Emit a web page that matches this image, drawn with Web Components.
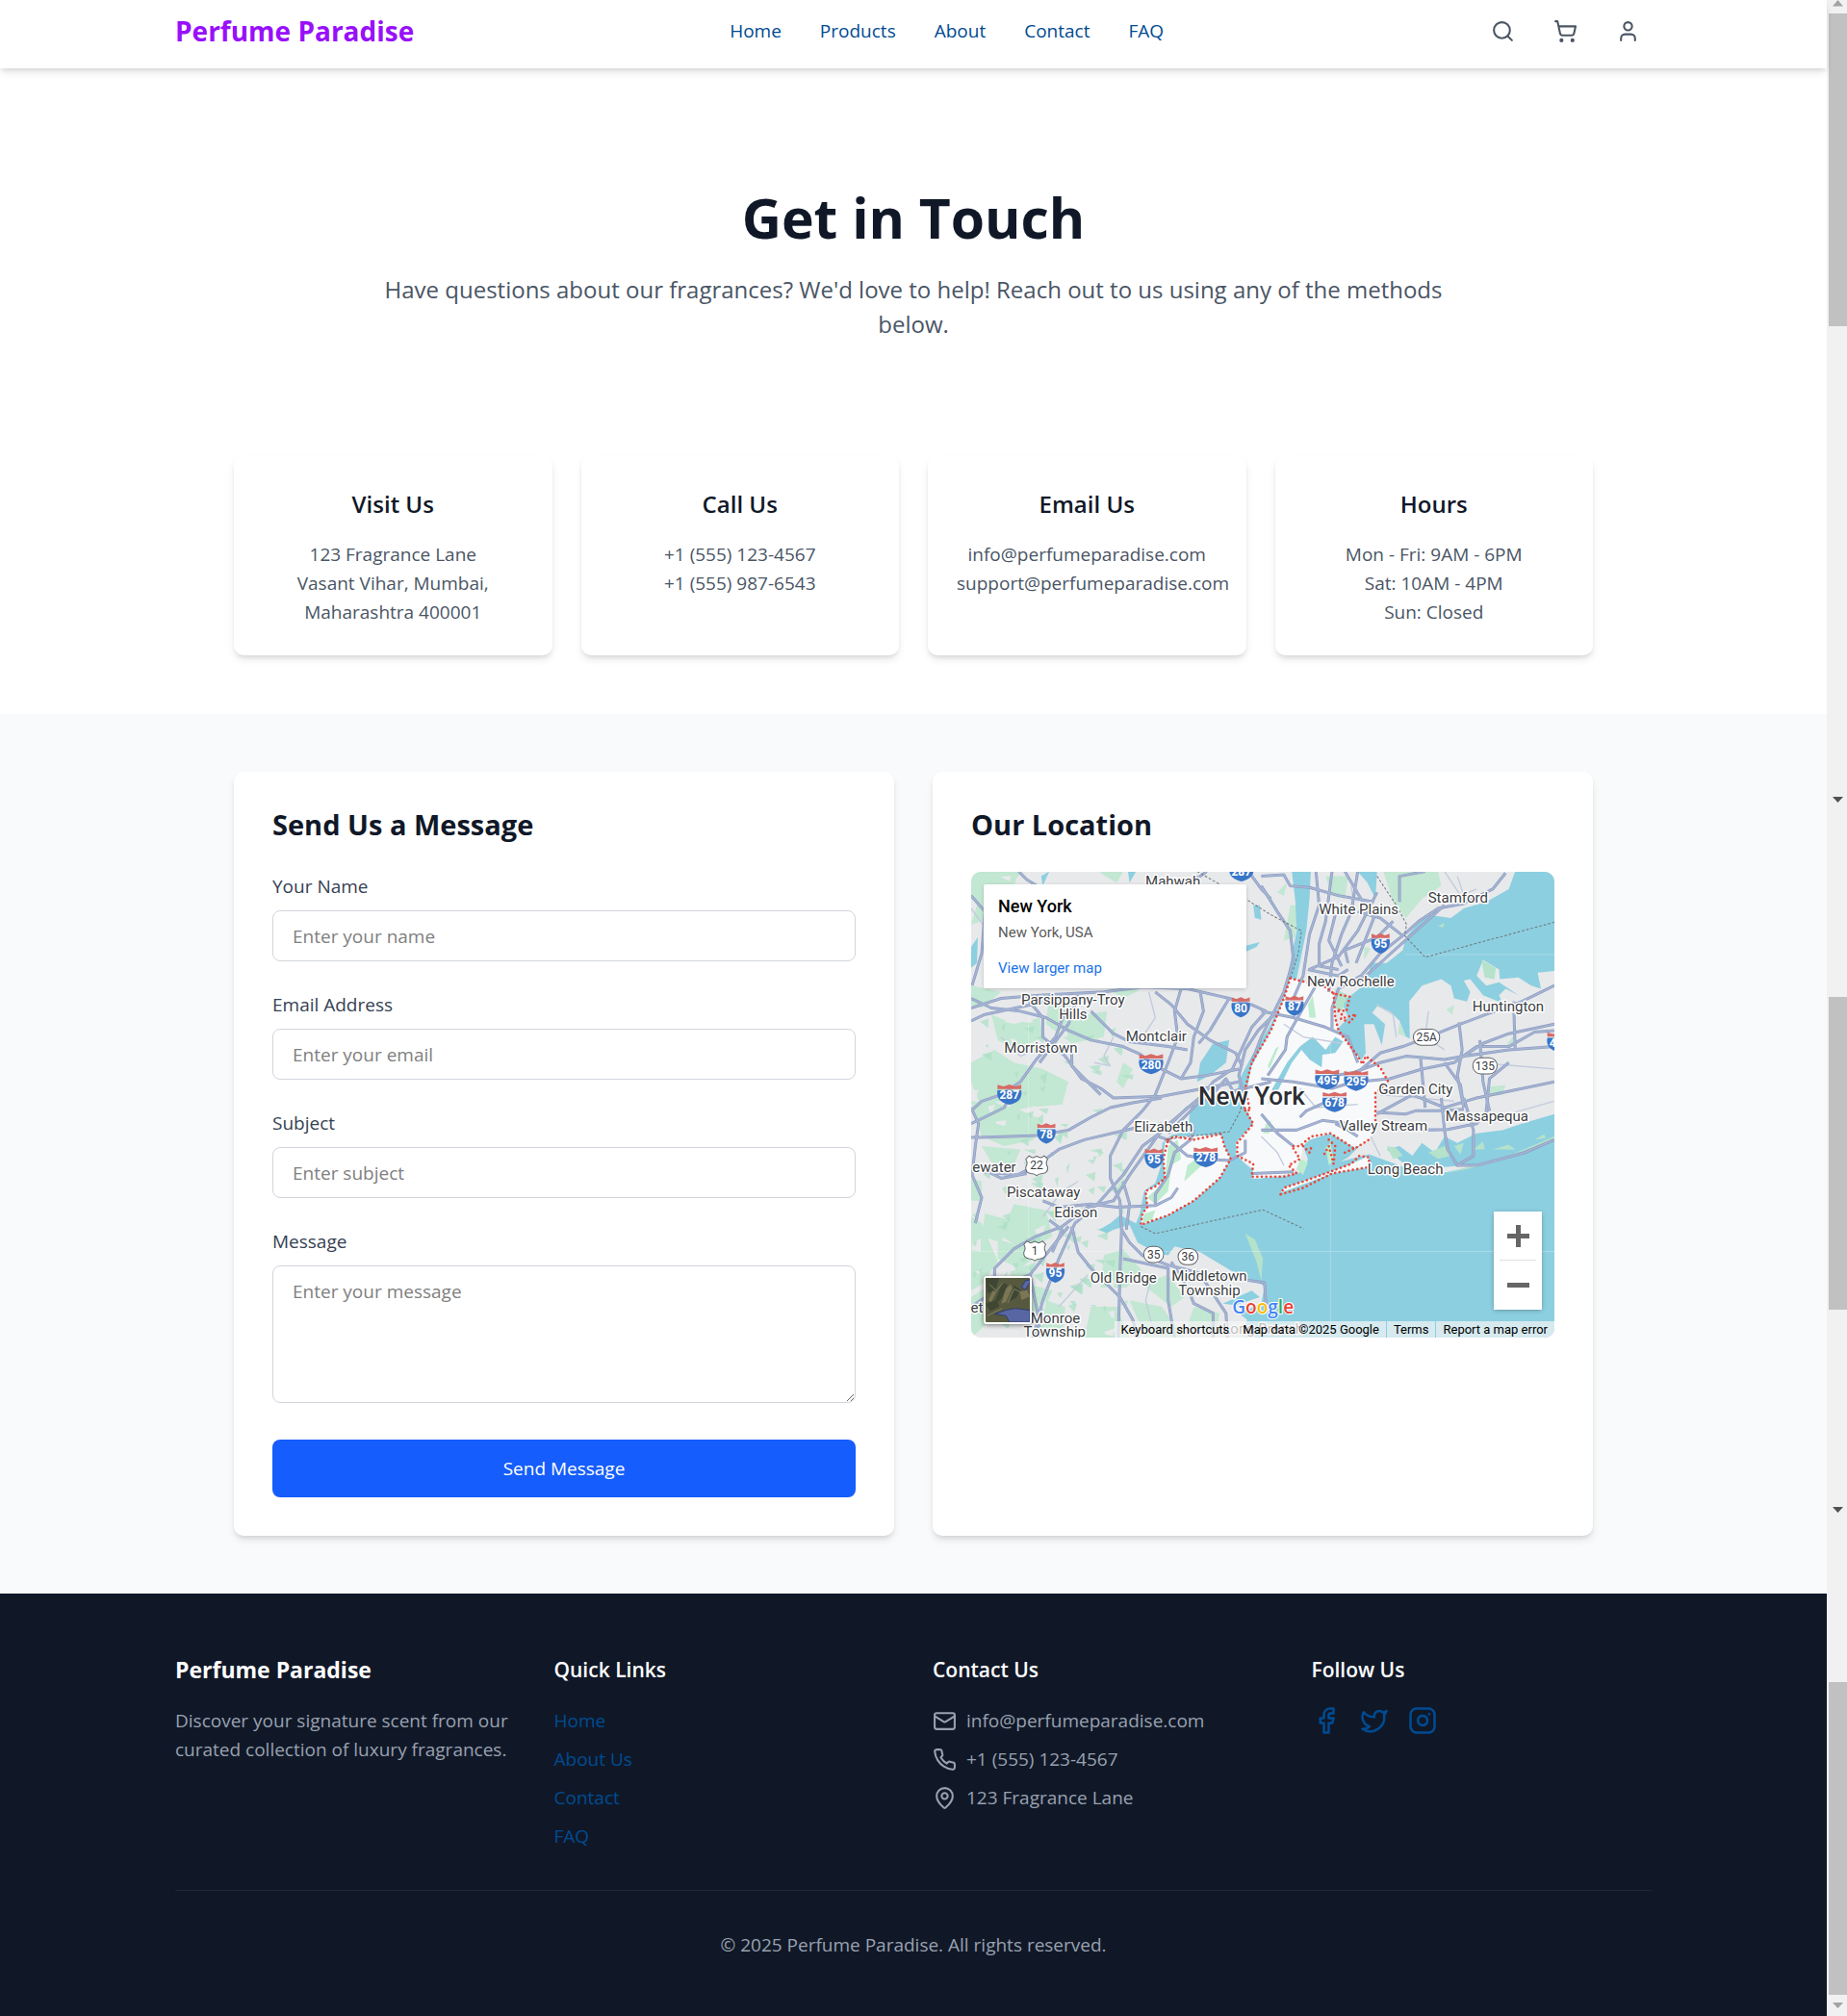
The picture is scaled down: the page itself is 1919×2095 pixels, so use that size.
<!DOCTYPE html>
<html lang="en">
<head>
<meta charset="utf-8">
<meta name="viewport" content="width=device-width, initial-scale=1">
<title>Perfume Paradise - Contact</title>
<style>
:root{
  --ink:#101828; --body:#4a5565; --label:#364153; --muted:#99a1af; --link:#004b91;
  --purple:#9810fa; --blue:#155dfc; --line:#d1d5dc; --tint:#f9fafb;
  --shadow:0 5px 8px -1px rgba(0,0,0,.1),0 3px 5px -2px rgba(0,0,0,.1);
}
*{box-sizing:border-box}
body{margin:0;font:19px/30px "Open Sans","Noto Sans",sans-serif;color:var(--ink);background:#fff}
.shell{display:grid;grid-template-columns:minmax(0,1fr) 21px}
.cards{display:grid;grid-template-columns:repeat(4,minmax(0,1fr));gap:30px;max-width:1412px;margin:0 auto 61px}
.tint{background:var(--tint);padding:60px 0}
.pair{display:grid;grid-template-columns:repeat(2,minmax(0,1fr));gap:40px;max-width:1412px;margin:0 auto}
</style>
</head>
<body>
<div class="shell">
  <div>
    <site-header></site-header>
    <main>
      <page-hero>
        <span slot="title">Get in Touch</span>
        Have questions about our fragrances? We'd love to help! Reach out to us using any of the methods below.
      </page-hero>
      <section class="cards">
        <info-card><span slot="title">Visit Us</span>123 Fragrance Lane<br>Vasant Vihar, Mumbai,<br>Maharashtra 400001</info-card>
        <info-card><span slot="title">Call Us</span>+1 (555) 123-4567<br>+1 (555) 987-6543</info-card>
        <info-card><span slot="title">Email Us</span>info@perfumeparadise.com<br>support@perfumeparadise.com</info-card>
        <info-card><span slot="title">Hours</span>Mon - Fri: 9AM - 6PM<br>Sat: 10AM - 4PM<br>Sun: Closed</info-card>
      </section>
      <section class="tint">
        <div class="pair">
          <content-panel><span slot="title">Send Us a Message</span><message-form></message-form></content-panel>
          <content-panel><span slot="title">Our Location</span><location-map></location-map></content-panel>
        </div>
      </section>
    </main>
    <site-footer></site-footer>
  </div>
  <scroll-rail></scroll-rail>
</div>
<script>
const define = (name, html, setup) => customElements.define(name, class extends HTMLElement {
  connectedCallback() {
    if (this.shadowRoot) return;
    const root = this.attachShadow({mode: 'open'});
    const t = document.createElement('template');
    t.innerHTML = '<style>*{box-sizing:border-box}:host{display:block}</style>' + (typeof html === 'function' ? html(this) : html);
    root.append(t.content.cloneNode(true));
    if (setup) setup(root, this);
  }
});

const ICONS = {
  search: '<circle cx="11" cy="11" r="8"/><path d="m21 21-4.3-4.3"/>',
  cart: '<circle cx="8" cy="21" r="1"/><circle cx="19" cy="21" r="1"/><path d="M2.05 2.05h2l2.66 12.42a2 2 0 0 0 2 1.58h9.78a2 2 0 0 0 1.95-1.57l1.65-7.43H5.12"/>',
  user: '<path d="M19 21v-2a4 4 0 0 0-4-4H9a4 4 0 0 0-4 4v2"/><circle cx="12" cy="7" r="4"/>',
  mail: '<rect width="20" height="16" x="2" y="4" rx="2"/><path d="m22 7-8.97 5.7a1.94 1.94 0 0 1-2.06 0L2 7"/>',
  phone: '<path d="M22 16.92v3a2 2 0 0 1-2.18 2 19.79 19.79 0 0 1-8.63-3.07 19.5 19.5 0 0 1-6-6 19.79 19.79 0 0 1-3.07-8.67A2 2 0 0 1 4.11 2h3a2 2 0 0 1 2 1.72 12.84 12.84 0 0 0 .7 2.81 2 2 0 0 1-.45 2.11L8.09 9.91a16 16 0 0 0 6 6l1.27-1.27a2 2 0 0 1 2.11-.45 12.84 12.84 0 0 0 2.81.7A2 2 0 0 1 22 16.92z"/>',
  pin: '<path d="M20 10c0 5-5.54 10.19-7.4 11.8a1 1 0 0 1-1.2 0C9.54 20.19 4 15 4 10a8 8 0 0 1 16 0"/><circle cx="12" cy="10" r="3"/>',
  facebook: '<path d="M18 2h-3a5 5 0 0 0-5 5v3H7v4h3v8h4v-8h3l1-4h-4V7a1 1 0 0 1 1-1h3z"/>',
  twitter: '<path d="M22 4s-.7 2.1-2 3.4c1.6 10-9.4 17.3-18 11.6 2.2.1 4.4-.6 6-2C3 15.5.5 9.6 3 5c2.2 2.6 5.6 4.1 9 4-.9-4.2 4-6.6 7-3.8 1.1 0 3-1.2 3-1.2z"/>',
  instagram: '<rect width="20" height="20" x="2" y="2" rx="5"/><path d="M16 11.37A4 4 0 1 1 12.63 8 4 4 0 0 1 16 11.37z"/><path d="M17.5 6.5h.01"/>'
};
define('line-icon', el => `<style>
  :host{width:25px;height:25px;flex:none}
  :host([large]){width:30px;height:30px}
  svg{display:block;width:100%;height:100%}
  </style><svg viewBox="0 0 24 24" fill="none" stroke="currentColor" stroke-width="2" stroke-linecap="round" stroke-linejoin="round" aria-hidden="true">${ICONS[el.getAttribute('name')]}</svg>`);

define('site-header', `<style>
  :host{position:relative;z-index:1;background:#fff;padding-bottom:7px;box-shadow:var(--shadow)}
  .bar{display:flex;align-items:center;justify-content:space-between;height:64px;max-width:1534px;margin:0 auto}
  .brand{color:var(--purple);font-size:28px;font-weight:700;text-decoration:none}
  nav{display:flex;gap:40px}
  nav a{color:var(--link);text-decoration:none}
  .tools{display:flex;gap:16px}
  button{border:0;background:none;padding:12px;color:var(--body)}
  </style>
  <div class="bar">
    <a class="brand" href="#">Perfume Paradise</a>
    <nav aria-label="Main"><a href="#">Home</a><a href="#">Products</a><a href="#">About</a><a href="#">Contact</a><a href="#">FAQ</a></nav>
    <div class="tools">
      <button aria-label="Search"><line-icon name="search"></line-icon></button>
      <button aria-label="Cart"><line-icon name="cart"></line-icon></button>
      <button aria-label="Account"><line-icon name="user"></line-icon></button>
    </div>
  </div>`);

define('page-hero', `<style>
  :host{padding:118px 0 119px;text-align:center}
  h1{margin:0 0 20px;font-size:57px;line-height:74px;font-weight:700}
  p{margin:0 auto;max-width:1130px;font-size:24px;line-height:36px;color:var(--body)}
  </style><h1><slot name="title"></slot></h1><p><slot></slot></p>`);

define('info-card', `<style>
  :host{min-height:207px;padding:30px;border-radius:10px;background:#fff;box-shadow:var(--shadow);text-align:center}
  h2{margin:0 0 17px;font-size:24px;line-height:40px;font-weight:600}
  p{margin:0;color:var(--body)}
  </style><h2><slot name="title"></slot></h2><p><slot></slot></p>`);

define('content-panel', `<style>
  :host{padding:40px;border-radius:10px;background:#fff;box-shadow:var(--shadow)}
  h2{margin:0 0 34px;font-size:29px;line-height:30px;font-weight:700}
  </style><h2><slot name="title"></slot></h2><slot></slot>`);

define('form-field', el => {
  const area = el.hasAttribute('multiline'), hint = el.getAttribute('hint');
  const type = el.getAttribute('type') || 'text';
  return `<style>
  label{display:block;margin-bottom:10px;color:var(--label)}
  input,textarea{display:block;width:100%;border:1px solid var(--line);border-radius:8px;background:#fff;padding:0 20px;font:inherit;color:var(--ink);outline:0}
  input{height:53px}
  textarea{height:143px;padding:11px 20px;resize:vertical}
  ::placeholder{color:#808080;opacity:1}
  </style><label for="f">${el.getAttribute('label')}</label>` +
  (area ? `<textarea id="f" placeholder="${hint}"></textarea>` : `<input id="f" type="${type}" placeholder="${hint}">`);
});

define('message-form', `<style>
  form{display:grid;gap:30px}
  button{height:60px;margin-top:8px;border:0;border-radius:8px;background:var(--blue);color:#fff;font:inherit}
  </style>
  <form>
    <form-field label="Your Name" hint="Enter your name"></form-field>
    <form-field label="Email Address" type="email" hint="Enter your email"></form-field>
    <form-field label="Subject" hint="Enter subject"></form-field>
    <form-field label="Message" hint="Enter your message" multiline></form-field>
    <button type="button">Send Message</button>
  </form>`);

/* ---- Map artwork ---- */
const WATER = [
  '1025,45 1084,45 1080,130 1070,230 1050,330 1035,400 1000,480 950,580 905,660 890,730 880,770 905,835 860,880 850,925 880,955 905,975 905,1000 1000,995 1130,960 1265,925 1400,975 1500,982 1600,960 1842,875 1842,1497 880,1497 885,1440 860,1420 930,1390 940,1335 840,1290 740,1230 660,1212 640,1240 600,1230 545,1200 520,1145 470,1160 450,1170 425,1160 460,1140 490,1115 540,1140 552,1110 565,1040 600,1015 618,960 622,890 650,865 700,855 710,780 760,745 800,750 850,740 868,680 900,620 960,520 1000,430 1020,330 1040,230 1036,140',
  '1720,45 1842,45 1842,355 1790,360 1800,410 1770,400 1730,375 1672,380 1670,350 1620,320 1600,370 1630,400 1670,390 1730,430 1690,410 1670,430 1680,455 1620,430 1580,380 1560,385 1580,420 1570,450 1530,440 1520,400 1490,380 1430,400 1390,450 1392,565 1380,560 1360,510 1330,480 1290,465 1275,485 1315,520 1305,585 1280,520 1250,520 1255,610 1235,640 1190,570 1168,535 1200,500 1180,450 1210,430 1260,390 1270,330 1320,330 1370,290 1380,250 1410,215 1450,180 1520,190 1560,160 1630,140 1700,100',
  '1030,600 1060,570 1110,575 1160,560 1190,570 1225,610 1180,600 1150,610 1120,660 1100,650 1080,610 1050,610 1020,640 980,700 960,760 935,790 950,740 975,690 1010,630',
  '1230,45 1290,45 1285,130 1260,80',
  '1320,910 1360,900 1400,930 1430,890 1470,920 1500,870 1540,890 1600,860 1680,850 1740,830 1842,800 1842,870 1740,920 1620,955 1500,965 1380,960',
  '780,580 830,570 820,640 770,680 730,700 740,640','885,275 925,265 915,280 870,300','515,45 540,45 520,80','27,280 48,250 45,330 27,345','245,60 270,45 250,90','905,150 925,150 930,195 910,190',
  '810,1390 900,1350 925,1370 850,1395'
];
const GREEN = [
  '27,45 180,45 150,110 70,160 27,130','420,45 500,45 480,80','60,100 140,80 120,180 27,210','27,400 120,420 60,470 27,460','27,640 100,600 160,640 250,660 330,700 310,770 200,780 120,800 50,760 27,700','90,490 160,520 240,500 250,560 170,600 110,570','270,430 330,440 340,500 450,480 440,560 340,580 260,520','500,640 530,660 500,720 480,700','450,410 560,410 500,440',
  '27,760 140,770 250,820 220,880 130,900 60,870','60,900 180,910 160,960 90,950','27,1000 60,1010 60,1070 27,1070','160,1080 260,1100 280,1180 200,1230 120,1180','70,1110 150,1130 120,1200 60,1180','27,1120 60,1140 110,1260 60,1330 27,1350','150,1290 230,1260 210,1330 280,1350 250,1420 150,1430','420,910 440,920 425,935','500,1000 520,1030 470,1040',
  '440,1240 500,1220 560,1290 510,1340 430,1340','560,1330 640,1300 690,1370 650,1400','400,1400 480,1400 520,1497 380,1497','520,1380 620,1400 690,1497 570,1497','260,1380 320,1400 310,1497 240,1497','720,1400 800,1420 790,1480 700,1460','110,1190 250,1230 180,1280 110,1250','27,1370 90,1330 110,1420 27,1497',
  '1310,45 1480,45 1490,90 1430,130 1380,190 1340,140','1130,60 1200,60 1190,130 1150,120','1020,150 1045,150 1035,250 1000,260','980,110 1010,80 1000,120','1440,45 1480,50 1470,90','1505,475 1530,460 1525,490','1640,715 1690,710 1680,740 1640,745','1360,515 1380,560 1355,550','1690,590 1715,555 1712,590','1070,450 1090,420 1090,500','1250,280 1270,285 1250,320'
];
/* Parks, barrier islands and marsh that lie over the water */
const SHORE_GREEN = [
  '1615,320 1660,345 1655,380 1625,375','1480,215 1500,205 1495,220','880,1172 910,1190 935,1250 930,1320 915,1260','1160,410 1200,430 1180,480 1160,470','1320,900 1350,905 1370,930 1340,940','1450,920 1500,900 1520,930 1480,940','1530,900 1560,890 1550,925','1590,910 1620,885 1625,910','1650,910 1700,895 1720,910','1780,880 1810,862 1815,875','1500,985 1700,930 1842,870 1842,880 1600,965'
];
const CITY = [
  '1020,378 1130,400 1155,420 1160,500 1170,540 1230,620 1245,640 1255,620 1300,650 1325,700 1285,735 1285,850 1265,880 1220,905 1145,860 1060,900 1050,960 1020,985 930,1000 900,1000 905,970 855,930 850,890 905,830 875,770 890,700 900,650 960,540 1000,440',
  '640,880 660,870 805,865 815,900 835,940 800,1000 720,1070 640,1115 555,1145 560,1110 575,1090 570,1040 600,1025 630,1000 625,940 630,890',
  '990,1045 1000,1030 1060,1010 1130,985 1210,955 1265,930 1265,965 1150,985'
];
const CITY_WATER = [
  '1010,640 1050,590 1090,560 1130,600 1160,560 1185,575 1160,610 1120,615 1118,655 1080,630 1055,600 1025,640 985,720 950,770 965,720',
  '1060,900 1080,880 1145,860 1220,905 1240,895 1200,935 1130,975 1060,985 1075,940'
];
const CITY_GREEN = ['640,900 670,880 680,940 650,960 640,1040 600,1080 575,1060 630,1010','700,960 740,930 745,960 690,1010','565,1110 600,1100 590,1130 560,1140','1050,940 1075,950 1060,990 1040,970','945,830 960,820 955,860 935,860','1075,460 1090,430 1100,500 1080,500','950,650 975,595 985,590 955,660','1130,905 1145,890 1155,940 1140,960'];
const ROADS = [
  '27,120 70,170 60,300 30,400','27,470 120,440 240,430 340,425 440,420 560,405 700,410 830,440 900,460 945,480','27,440 90,470 180,480 260,500 330,540 400,570 500,590 555,615 600,650 680,690 760,680 860,660','400,480 470,550 520,575 640,590 700,600','320,480 290,560 230,630 180,700 120,740 60,760 27,790','200,440 250,500 250,560 320,620 370,690 430,720 470,750 620,745 700,730 860,700','600,420 650,460 700,520 770,570 850,610 870,650','680,410 660,480 670,560 640,640 600,740 560,790','740,420 750,480 720,560 710,640 680,690','175,45 200,70 240,95','890,45 930,100 960,130','660,90 740,60 760,45','980,480 920,540 880,600 860,680 870,720','945,480 900,530 840,660 780,700 720,780 640,860','830,440 770,540 735,580','340,590 340,650 430,740','27,510 70,490 260,450','360,430 330,520 240,640','860,760 820,690 760,760',
  '930,60 1000,55 1020,90 1080,95 1170,120 1280,140','930,90 980,170 1020,230 1030,320 1000,420 930,560 900,640','1100,45 1110,150 1080,240 1060,370 1030,440','1150,45 1130,200 1110,270 1110,340 1170,350','1230,45 1210,170 1180,240 1150,330 1140,420','1290,110 1230,230 1170,310 1080,350','1190,45 1240,130 1280,190 1225,330','1690,50 1650,100 1560,145 1480,160 1420,200 1370,245 1300,300 1240,370 1170,410 1150,470 1150,540','1500,150 1400,240 1300,330 1220,400','1230,170 1300,190 1370,245','1200,330 1190,290 1290,250 1340,200','1160,180 1140,260 1180,340','1360,140 1360,60 1440,45','930,480 1030,500 1130,530 1200,560 1230,640','1100,400 1060,470 1010,560 1005,600 950,680','1075,350 1170,370 1200,350',
  '1230,670 1300,610 1370,590 1450,560 1550,520 1630,490 1740,450 1842,400','1100,690 1220,670 1300,640 1380,620 1500,630 1560,620 1620,580 1700,550 1842,520','1230,700 1330,690 1430,660 1530,640 1600,590 1700,590 1780,545 1842,540','1545,515 1555,600 1540,680 1560,780','1500,640 1550,710 1560,780','1610,570 1620,700 1640,790','1715,450 1720,600','1425,620 1440,780','930,690 1030,700 1150,720 1250,690','1290,800 1400,740 1500,780 1600,750 1842,700','1560,620 1700,600 1842,590','1630,790 1640,690 1700,640',
  '27,873 150,870 230,867 330,850 400,810 460,780 530,765 620,750','60,980 170,990 230,960 300,910 380,880 530,845 620,830','27,780 50,830 40,900 30,990 60,1060 40,1140','40,960 120,1000 200,985','960,700 760,750 700,780 640,840 560,900 500,990 420,1080 350,1140 300,1250 250,1380 220,1497','760,730 690,790 620,850 520,990 470,1070 390,1090 310,1150 230,1180 160,1220 100,1280 100,1400','560,790 500,850 460,930 460,1000 490,1070 495,1160 520,1200 560,1240 640,1270 760,1300 840,1310 940,1325 945,1400','495,1160 490,1300 485,1497','340,1150 360,1230 400,1280 490,1370 530,1440 545,1497','250,1070 300,1090 400,1080 480,1090 600,1085 650,1060 670,1030','500,1250 640,1280 640,1380 660,1497','650,1260 700,1340 720,1390 780,1420 780,1497','740,1300 820,1420 825,1497','610,870 640,880 700,930 760,940 830,945 880,920 880,880','640,990 660,920 710,880 720,850','600,1080 600,1050 640,990','500,1010 520,1080 510,1160','27,1400 130,1330 210,1300 330,1150','27,830 130,780 150,740','210,1300 240,1450 230,1497','270,1130 310,1160 280,1230',
  '1290,795 1380,800 1410,790 1480,790 1560,785','1490,750 1500,850 1510,910 1540,960 1600,960 1750,920 1842,880','1560,750 1590,850 1590,930 1540,960','1430,850 1510,848 1600,830 1640,780','1160,830 1200,850 1230,870','930,850 1040,850 1120,820 1240,835','1050,810 1070,790 1160,750','930,800 980,860 1030,900','900,985 1030,980'
];
const LOCAL = ['580,420 600,500 560,560','470,560 440,620 460,650 410,640','27,160 100,260 130,400','1500,45 1550,120 1600,100','1450,480 1440,560 1500,600','1290,460 1340,490 1350,560','1540,60 1560,120','1000,520 1060,560 1180,580','1050,720 1100,780 1230,770','930,870 980,920 1000,960','1300,740 1420,750 1530,760','1600,640 1842,660','1700,800 1842,760','1270,870 1300,930','250,1120 310,1040 360,1010','590,1300 570,1380 600,1497','300,1400 390,1300','120,560 180,620 230,600','1210,90 1220,170'];
const DOTS = [
  '1020,378 1080,392 1130,405 1155,425 1205,435 1195,480 1165,475 1190,500 1225,490 1205,515 1170,500','1020,378 1000,440 960,540 900,640 880,720 895,790 875,780 905,830 855,890 855,930 905,955 900,995 1000,995 1040,985 1015,960 1050,940 1025,900 1050,900 1085,870 1145,860 1220,908 1265,880','1155,425 1160,500 1170,540 1230,620 1245,645 1255,620 1300,655 1325,700 1285,735 1285,850',
  '640,880 660,870 720,880 805,862 815,900 835,940 800,1000 720,1070 640,1115 555,1145 560,1110 575,1090 570,1040 600,1025 630,1000 625,940 640,880','990,1050 1000,1030 1060,1010 1130,985 1210,955 1235,930 1265,935 1265,965 1150,985 1060,1030 990,1050','1140,880 1160,900 1155,955 1140,900 1120,935','1060,900 1080,920 1085,905','1190,920 1225,905'
];
const BORDERS = ['730,45 880,130 960,180 1055,230 1045,300 1022,375','1290,60 1350,150 1382,210 1376,245 1440,312 1842,203','555,1150 600,1172 935,1098 1062,1157','630,880 700,870 830,855 865,790 880,720'];
const PLACES = [
  [655,90,'Mahwah'],[344,460,'Parsippany-Troy'],[344,505,'Hills'],[244,609,'Morristown'],[603,573,'Montclair'],
  [1233,178,'White Plains'],[1542,141,'Stamford'],[1208,402,'New Rochelle'],[1698,481,'Huntington'],[1410,739,'Garden City'],
  [1632,821,'Massapequa'],[1310,852,'Valley Stream'],[1378,988,'Long Beach'],[625,854,'Elizabeth'],[99,981,'ewater'],
  [252,1058,'Piscataway'],[353,1122,'Edison'],[501,1324,'Old Bridge'],[768,1319,'Middletown'],[768,1364,'Township'],[289,1450,'Monroe'],[287,1493,'Township'],[70,1418,'eton'],[935,1485,'Long Branch']
];
const SHIELDS = [[868,45,'287'],[866,468,'80'],[587,645,'280'],[146,740,'287'],[1301,270,'95'],[1033,464,'87'],[1135,693,'495'],[1225,697,'295'],[1158,763,'678'],[1857,577,'495'],[261,861,'78'],[596,939,'95'],[757,935,'278'],[289,1294,'95']];
const US = [[231,961,'22'],[225,1226,'1']];
const STATE = [[1444,561,'25A',82],[1626,650,'135',76],[595,1237,'35',62],[702,1244,'36',62]];
const polys = (list, attrs) => `<g ${attrs}>${list.map(p => `<polygon points="${p}"/>`).join('')}</g>`;
const lines = (list, attrs) => `<g fill="none" stroke-linejoin="round" ${attrs}>${list.map(p => `<polyline points="${p}"/>`).join('')}</g>`;
const interstate = ([x, y, n]) => {
  const w = n.length > 2 ? 37 : 28;
  return `<g transform="translate(${x} ${y})"><path d="M${-w} -14H${w}C${w + 4} 8 ${w - 6} 24 0 31C${-w + 6} 24 ${-w - 4} 8 ${-w} -14z" fill="#3875c8"/><path d="M${-w} -18V-31L${-w / 2} -26L0 -32L${w / 2} -26L${w} -31V-18z" fill="#d86a66"/><text y="14" font-size="36" font-weight="700" fill="#fff">${n}</text></g>`;
};
const usRoute = ([x, y, n]) => `<g transform="translate(${x} ${y})"><path d="M-24 -31L-16 -26Q-8 -24 0 -30Q8 -24 16 -26L24 -31L34 -20Q26 -8 34 4Q36 22 18 24Q6 24 0 31Q-6 24 -18 24Q-36 22 -34 4Q-26 -8 -34 -20z" fill="#fff" stroke="#5f6368" stroke-width="3"/><text y="12" font-size="36" fill="#3c4043">${n}</text></g>`;
const stateRoute = ([x, y, n, w]) => `<g transform="translate(${x} ${y})"><rect x="${-w / 2}" y="-25" width="${w}" height="50" rx="25" fill="#fff" stroke="#5f6368" stroke-width="3"/><text y="12" font-size="36" fill="#3c4043">${n}</text></g>`;

define('location-map', `<style>
  :host{position:relative;height:484px;border-radius:10px;overflow:hidden;font-family:Roboto,sans-serif;background:#e8eaed}
  .art{display:block;width:100%;height:100%}
  .place{position:absolute;left:13px;top:13px;width:273px;height:108px;padding:12px 15px;background:#fff;border-radius:2px;box-shadow:0 1px 4px -1px rgba(0,0,0,.3);font-size:15px;line-height:20px;color:#5b5b5b}
  .place strong{display:block;margin-bottom:6px;font-size:18px;line-height:22px;font-weight:500;color:#000}
  .place a{display:block;margin-top:17px;color:#1a73e8;text-decoration:none}
  .zoom{position:absolute;right:13px;bottom:29px;width:50px;background:#fff;box-shadow:0 1px 5px -1px rgba(0,0,0,.4)}
  .zoom button{display:grid;place-items:center;width:50px;height:51px;padding:0;border:0;background:none}
  .zoom hr{position:absolute;top:50px;left:6px;width:38px;margin:0;border:0;border-top:1px solid #e0e0e0}
  .sat{position:absolute;left:13px;bottom:14px;width:50px;height:50px;padding:0;border:2px solid #fff;border-radius:3px;overflow:hidden;box-shadow:0 1px 5px rgba(0,0,0,.5)}
  .sat svg{display:block}
  .legal{position:absolute;right:0;bottom:0;display:flex;gap:1px;font-size:13px;line-height:17px}
  .legal>*{padding:0 7px;border:0;background:rgba(245,245,245,.7);font:inherit;color:#000;text-decoration:none}
  .legal :nth-child(2){margin-left:-1px}
  </style>
  <svg class="art" viewBox="27 45 1815 1452" preserveAspectRatio="xMidYMid slice" font-family="Roboto,sans-serif" text-anchor="middle">
    <rect x="27" y="45" width="1815" height="1452" fill="#e7e9eb"/>
    ${polys(GREEN, 'fill="#c2e7d2"')}
    <g id="shards" fill="#e7e9eb"></g>
    ${polys(WATER, 'fill="#8ccfe0"')}
    ${polys(SHORE_GREEN, 'fill="#b5e2cb"')}
    ${polys(CITY, 'fill="#f8f9fa"')}
    ${polys(CITY_WATER, 'fill="#8ccfe0"')}
    ${polys(CITY_GREEN, 'fill="#bdeccf"')}
    <path d="M1145 45V1497M205 45V1497M27 1228H1842M1376 304H1842" stroke="#fff" stroke-opacity=".25" stroke-width="3"/>
    ${lines(LOCAL, 'stroke="#c3cbdd" stroke-width="4"')}
    ${lines(ROADS, 'stroke="#8c9cc2" stroke-width="9"')}
    ${lines(ROADS, 'stroke="#a6b4d2" stroke-width="5"')}
    ${lines(BORDERS, 'stroke="#70757a" stroke-width="3" stroke-dasharray="8 6"')}
    ${lines(DOTS, 'stroke="#e8473b" stroke-width="8" stroke-linecap="round" stroke-dasharray="0 14"')}
    <g font-size="45" fill="#3c4043" stroke="#fff" stroke-width="9" stroke-linejoin="round" paint-order="stroke">
      ${PLACES.map(([x, y, n]) => `<text x="${x}" y="${y}">${n}</text>`).join('')}
      <text x="900" y="772" font-size="78" font-weight="500" fill="#2b2e33">New York</text>
    </g>
    ${SHIELDS.map(interstate).join('')}${US.map(usRoute).join('')}${STATE.map(stateRoute).join('')}
    <text x="935" y="1420" font-family="Open Sans,sans-serif" font-size="57" font-weight="600" stroke="#fff" stroke-width="6" stroke-linejoin="round" paint-order="stroke"><tspan fill="#4285f4">G</tspan><tspan fill="#ea4335">o</tspan><tspan fill="#fbbc04">o</tspan><tspan fill="#4285f4">g</tspan><tspan fill="#34a853">l</tspan><tspan fill="#ea4335">e</tspan></text>
  </svg>
  <div class="place"><strong>New York</strong>New York, USA<a href="#">View larger map</a></div>
  <button class="sat" aria-label="Show satellite imagery"><svg width="46" height="46" viewBox="0 0 48 48"><path fill="#57593f" d="M0 0h48v48H0z"/><path fill="#3f4733" d="M0 0h15l-4 12-9 5zM18 5l6 2-7 16-8 6zM31 8l7 5-5 9-7 3zM0 28l12-4 3 7-10 5z"/><path fill="#7b7655" d="M8 14l4 1-6 11-3-2zM22 12l5-5 2 4-7 15-5 2zM37 15l8-2 3 7-9 4z"/><path d="M4 7l8 7 7-9m5 22 7-15 10 5M2 41l16-8" stroke="#817e63" fill="none"/><path fill="#5866a3" stroke="#2d3d67" d="M48 35l-16-2-10 2-12 4 12 2 4 7h22zM48 2l-5 1-4 7 4 3 5-8z"/></svg></button>
  <div class="zoom">
    <button aria-label="Zoom in"><svg width="23" height="23"><path d="M9 0h5v9h9v5h-9v9H9v-9H0V9h9z" fill="#666"/></svg></button><hr>
    <button aria-label="Zoom out"><svg width="23" height="5"><path d="M0 0h23v5H0z" fill="#666"/></svg></button>
  </div>
  <div class="legal"><button>Keyboard shortcuts</button><span>Map data ©2025 Google</span><a href="#">Terms</a><a href="#">Report a map error</a></div>`,
  root => {
    /* Small angular clearings break up the western parkland; a fixed seed keeps them stable. */
    let s = 7, out = '';
    const r = n => (s = (s * 16807) % 2147483647) % n;
    for (let i = 0; i < 110; i++) {
      const x = 30 + r(700), y = i % 3 ? 400 + r(1080) : 45 + r(500), a = 12 + r(26), b = 10 + r(22);
      out += `<polygon points="${x},${y} ${x + a},${y - r(16)} ${x + a - r(14)},${y + b} ${x + r(10)},${y + b - r(12)}"/>`;
    }
    for (let i = 0; i < 110; i++) {
      const x = 30 + r(480), y = 480 + r(980), a = 10 + r(30), b = 8 + r(20);
      out += `<polygon fill="#a9dfc4" fill-opacity=".7" points="${x},${y} ${x + a},${y - r(14)} ${x + a - r(10)},${y + b}"/>`;
    }
    root.getElementById('shards').innerHTML = out;
  });

define('site-footer', `<style>
  :host{background:var(--ink);color:var(--muted);padding:60px 0 59px}
  .inner{max-width:1534px;margin:0 auto}
  .cols{display:grid;grid-template-columns:repeat(4,minmax(0,1fr));gap:40px;padding-bottom:41px}
  h2,h3{margin:0 0 19px;color:#fff;line-height:38px;font-size:21px;font-weight:600}
  h2{font-size:23px;font-weight:700}
  p{margin:0}
  ul{display:grid;gap:10px;margin:0;padding:0;list-style:none}
  li{display:flex;align-items:center;gap:10px}
  a{color:var(--link);text-decoration:none}
  .social{display:flex;gap:20px}
  .copy{border-top:1px solid #1e2939;padding-top:41px;text-align:center}
  </style>
  <footer class="inner">
    <div class="cols">
      <section><h2>Perfume Paradise</h2><p>Discover your signature scent from our curated collection of luxury fragrances.</p></section>
      <section><h3>Quick Links</h3><ul><li><a href="#">Home</a></li><li><a href="#">About Us</a></li><li><a href="#">Contact</a></li><li><a href="#">FAQ</a></li></ul></section>
      <section><h3>Contact Us</h3><ul><li><line-icon name="mail"></line-icon>info@perfumeparadise.com</li><li><line-icon name="phone"></line-icon>+1 (555) 123-4567</li><li><line-icon name="pin"></line-icon>123 Fragrance Lane</li></ul></section>
      <section><h3>Follow Us</h3><div class="social"><a href="#" aria-label="Facebook"><line-icon large name="facebook"></line-icon></a><a href="#" aria-label="Twitter"><line-icon large name="twitter"></line-icon></a><a href="#" aria-label="Instagram"><line-icon large name="instagram"></line-icon></a></div></section>
    </div>
    <p class="copy">© 2025 Perfume Paradise. All rights reserved.</p>
  </footer>`);

define('scroll-rail', `<style>
  :host{display:flex;flex-direction:column;background:#f1f1f1;padding-left:2px}
  i{display:block;flex:325 1 0;background:#c1c1c1}
  b{display:block}
  svg{display:block;flex:none;margin:0 auto;fill:#505050}
  .off{fill:#a3a3a3}
  </style>
  <svg class="off" width="13" height="14"><path d="M1 6.500 6.500 0 12 6.500z"/></svg>
  <i></i><b style="flex:489 1 0"></b>
  <svg width="13" height="8"><path d="M1 0h11L6.500 6z"/></svg>
  <b style="flex:200 1 0"></b><i></i><b style="flex:205 1 0"></b>
  <svg width="13" height="8"><path d="M1 0h11L6.500 6z"/></svg>
  <b style="flex:174 1 0"></b><i></i>
  <svg class="off" width="13" height="22"><path d="M1 8h11L6.500 14z"/></svg>`);
</script>
</body>
</html>
